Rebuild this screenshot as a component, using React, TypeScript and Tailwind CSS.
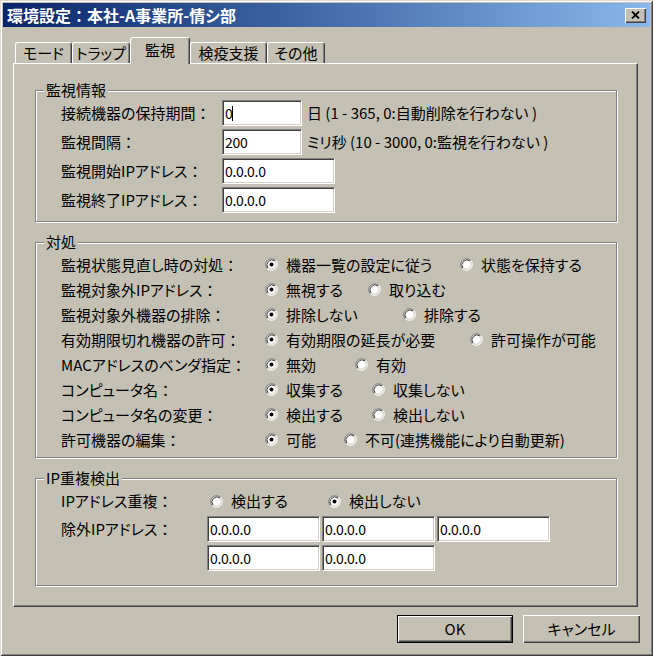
import React from "react";

// classic win2k style dialog: 監視 tab of 環境設定

function Radio({ checked }: { checked?: boolean }) {
  return (
    <svg width="13" height="13" viewBox="0 0 13 13" className="shrink-0">
      <circle cx="6.5" cy="6.5" r="5" fill="#ffffff" />
      <path d="M2.26 10.74 A6 6 0 0 1 10.74 2.26" fill="none" stroke="#808080" />
      <path d="M10.74 2.26 A6 6 0 0 1 2.26 10.74" fill="none" stroke="#ffffff" />
      <path d="M3.0 10.0 A5 5 0 0 1 10.0 3.0" fill="none" stroke="#404040" />
      <path d="M10.0 3.0 A5 5 0 0 1 3.0 10.0" fill="none" stroke="#dcd8cc" />
      {checked && <circle cx="6.5" cy="6.5" r="2" fill="#000000" />}
    </svg>
  );
}

// full width colon keeps its own cell, like the bitmap font does
function Label({ text }: { text: string }) {
  if (!text.endsWith("：")) return <>{text}</>;
  return (
    <>
      {text.slice(0, -1)}
      <span className="[font-feature-settings:normal]">：</span>
    </>
  );
}

function Option({ checked, label }: { checked?: boolean; label: string }) {
  return (
    <div className="flex items-center gap-[8px] whitespace-nowrap">
      <Radio checked={checked} />
      <span>{label}</span>
    </div>
  );
}

function TextBox({
  w,
  value,
  caret,
}: {
  w: string;
  value: string;
  caret?: boolean;
}) {
  return (
    <div
      className={`${w} h-[26px] shrink-0 bg-white border border-t-[#808080] border-l-[#808080] border-r-white border-b-white shadow-[inset_1px_1px_0_#404040,inset_-1px_-1px_0_#d4d0c8] flex items-center pl-[2px] text-[14px] tracking-[-0.3px]`}
    >
      <span>{value}</span>
      {caret && <span className="w-px h-[15px] bg-black" />}
    </div>
  );
}

function Group({
  title,
  children,
}: {
  title: string;
  children: React.ReactNode;
}) {
  return (
    <div className="border border-[#808080] shadow-[1px_1px_0_#ffffff,inset_1px_1px_0_#ffffff]">
      <div className="-mt-[11px] ml-[8px] w-fit px-[2px] bg-[#c4c0b4] leading-[20px]">
        {title}
      </div>
      {children}
    </div>
  );
}

const monitorRows = [
  { label: "接続機器の保持期間：", value: "0", w: "w-[80px]", caret: true, note: "日 (1 - 365, 0:自動削除を行わない )" },
  { label: "監視間隔：", value: "200", w: "w-[80px]", note: "ミリ秒 (10 - 3000, 0:監視を行わない )" },
  { label: "監視開始IPアドレス：", value: "0.0.0.0", w: "w-[113px]" },
  { label: "監視終了IPアドレス：", value: "0.0.0.0", w: "w-[113px]" },
];

const actionRows = [
  { label: "監視状態見直し時の対処：", a: "機器一覧の設定に従う", b: "状態を保持する", w: "w-[195px]" },
  { label: "監視対象外IPアドレス：", a: "無視する", b: "取り込む", w: "w-[103px]" },
  { label: "監視対象外機器の排除：", a: "排除しない", b: "排除する", w: "w-[138px]" },
  { label: "有効期限切れ機器の許可：", a: "有効期限の延長が必要", b: "許可操作が可能", w: "w-[205px]" },
  { label: "MACアドレスのベンダ指定：", a: "無効", b: "有効", w: "w-[90px]" },
  { label: "コンピュータ名：", a: "収集する", b: "収集しない", w: "w-[107px]" },
  { label: "コンピュータ名の変更：", a: "検出する", b: "検出しない", w: "w-[107px]" },
  { label: "許可機器の編集：", a: "可能", b: "不可(連携機能により自動更新)", w: "w-[79px]" },
];

const tabs = [
  { label: "モード", w: "w-[57px]" },
  { label: "トラップ", w: "w-[58px]" },
  { label: "監視", w: "w-[60px]", active: true },
  { label: "検疫支援", w: "w-[77px]" },
  { label: "その他", w: "w-[58px]" },
];

export default function App() {
  return (
    <div className="w-[653px] h-[656px] bg-[#c4c0b4] p-[3px] flex flex-col text-black text-[15px] leading-[20px] font-['Noto_Sans_CJK_JP','Noto_Sans_CJK_SC',sans-serif] [font-feature-settings:'palt'] shadow-[inset_1px_1px_0_#dedad0,inset_-1px_-1px_0_#404040,inset_2px_2px_0_#ffffff,inset_-2px_-2px_0_#808080]">
      {/* title bar */}
      <div className="h-[24px] shrink-0 flex items-center justify-between pl-[4px] pr-[4px] bg-linear-to-r from-[#0a246a] to-[#8cb8ec]">
        <span className="text-white font-bold text-[16px] leading-[24px] whitespace-nowrap">
          環境設定<span className="[font-feature-settings:normal]">：</span>本社-A事業所-情シ部
        </span>
        <div className="w-[21px] h-[15px] bg-[#c4c0b4] flex items-center justify-center shadow-[inset_1px_1px_0_#ffffff,inset_-1px_-1px_0_#404040,inset_-2px_-2px_0_#808080]">
          <svg width="9" height="8" viewBox="0 0 9 8">
            <path d="M1 0.5 L8 7.5 M8 0.5 L1 7.5" stroke="#000" strokeWidth="1.8" />
          </svg>
        </div>
      </div>

      <div className="flex flex-col pl-[10px] pr-[12px] pt-[10px]">
        {/* tabs */}
        <div className="flex items-end h-[26px] ml-[2px]">
          {tabs.map((t) =>
            t.active ? (
              <div
                key={t.label}
                className={`${t.w} h-[27px] -mb-[1px] relative z-10 bg-[#c4c0b4] border-l border-t border-r border-l-white border-t-white border-r-[#404040] shadow-[inset_-1px_0_0_#808080] rounded-t-[3px] flex justify-center pt-[2px] whitespace-nowrap`}
              >
                {t.label}
              </div>
            ) : (
              <div
                key={t.label}
                className={`${t.w} h-[21px] border-l border-t border-r border-l-white border-t-white border-r-[#404040] shadow-[inset_-1px_0_0_#808080] rounded-t-[3px] flex items-center justify-center whitespace-nowrap`}
              >
                {t.label}
              </div>
            )
          )}
        </div>

        {/* tab panel */}
        <div className="h-[544px] border border-t-white border-l-white border-r-[#404040] border-b-[#404040] shadow-[inset_-1px_-1px_0_#808080] pt-[26px] pl-[21px] pr-[20px] flex flex-col gap-[20px]">
          <Group title="監視情報">
            <div className="flex flex-col gap-[3px] pl-[25px] pb-[8px]">
              {monitorRows.map((r) => (
                <div key={r.label} className="flex h-[26px] items-center">
                  <div className="w-[161px] shrink-0 whitespace-nowrap">
                    <Label text={r.label} />
                  </div>
                  <TextBox w={r.w} value={r.value} caret={r.caret} />
                  {r.note && <span className="ml-[5px] whitespace-nowrap">{r.note}</span>}
                </div>
              ))}
            </div>
          </Group>

          <Group title="対処">
            <div className="flex flex-col pl-[25px] pb-[5px]">
              {actionRows.map((r) => (
                <div key={r.label} className="flex h-[25px] items-center">
                  <div className="w-[204px] shrink-0 whitespace-nowrap">
                    <Label text={r.label} />
                  </div>
                  <div className={`${r.w} shrink-0`}>
                    <Option checked label={r.a} />
                  </div>
                  <Option label={r.b} />
                </div>
              ))}
            </div>
          </Group>

          <Group title="IP重複検出">
            <div className="flex flex-col pl-[25px] pb-[14px]">
              <div className="flex h-[26px] items-center">
                <div className="w-[146px] shrink-0">
                  <Label text="IPアドレス重複：" />
                </div>
                <div className="w-[121px] shrink-0 pl-[3px]">
                  <Option label="検出する" />
                </div>
                <Option checked label="検出しない" />
              </div>
              <div className="flex mt-[2px]">
                <div className="w-[146px] shrink-0 leading-[26px]">
                  <Label text="除外IPアドレス：" />
                </div>
                <div className="flex flex-col gap-[3px]">
                  <div className="flex gap-[2px]">
                    <TextBox w="w-[113px]" value="0.0.0.0" />
                    <TextBox w="w-[113px]" value="0.0.0.0" />
                    <TextBox w="w-[113px]" value="0.0.0.0" />
                  </div>
                  <div className="flex gap-[2px]">
                    <TextBox w="w-[113px]" value="0.0.0.0" />
                    <TextBox w="w-[113px]" value="0.0.0.0" />
                  </div>
                </div>
              </div>
            </div>
          </Group>
        </div>

        {/* buttons */}
        <div className="flex justify-end gap-[10px] mt-[8px] -mr-[2px]">
          <button className="w-[116px] h-[28px] border border-black bg-[#c4c0b4] shadow-[inset_1px_1px_0_#ffffff,inset_-1px_-1px_0_#404040,inset_-2px_-2px_0_#808080]">
            OK
          </button>
          <button className="w-[117px] h-[28px] bg-[#c4c0b4] shadow-[inset_1px_1px_0_#ffffff,inset_-1px_-1px_0_#404040,inset_-2px_-2px_0_#808080]">
            キャンセル
          </button>
        </div>
      </div>
    </div>
  );
}
